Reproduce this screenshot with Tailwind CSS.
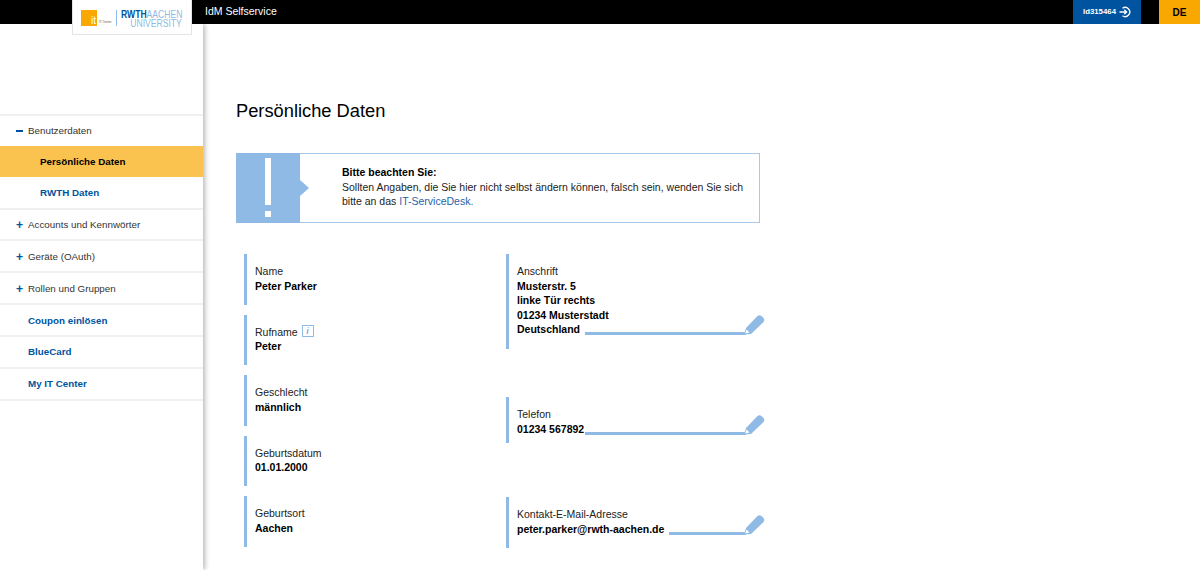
<!DOCTYPE html>
<html lang="de">

<head>
    <meta charset="UTF-8">
    <title>IdM Selfservice</title>
    <script src="https://cdn.jsdelivr.net/npm/@tailwindcss/browser@4"></script>
</head>

<body class="bg-white font-['Liberation_Sans',Arial,sans-serif] text-[10.5px] text-[#222] h-[570px] overflow-hidden">
    <!-- Kopfzeile -->
    <header class="relative z-20 h-6 bg-black flex items-stretch text-white">
        <div class="ml-[72px] w-[120px] h-[35px] bg-white border border-t-0 border-[#e4e4e4] flex items-start shrink-0">
            <div class="shrink-0 ml-[8px] mt-[10px] w-4 h-4 bg-[#f8a800] flex items-end justify-end pr-[1px]">
                <span class="text-[10px] leading-[10px] text-white">it</span>
            </div>
            <span class="shrink-0 mt-[20px] ml-[2px] text-[3px] leading-[4px] text-[#555] whitespace-nowrap w-[13px]">IT Center</span>
            <div class="shrink-0 mt-[10px] ml-[4px] w-px h-4 bg-[#8ebae5]"></div>
            <div class="ml-[4px] mt-[10px] w-[78px] shrink-0 origin-left scale-x-[0.78] text-[11px] leading-[9px] whitespace-nowrap">
                <div><span class="font-bold text-[#00549f]">RWTH</span><span class="text-[#8ebae5]">AACHEN</span></div>
                <div class="text-right text-[#8ebae5]">UNIVERSITY</div>
            </div>
        </div>
        <div class="ml-[13px] text-[10.5px] leading-[23px]">IdM Selfservice</div>
        <div class="ml-auto flex items-stretch">
            <a class="w-[68px] bg-[#00549f] flex items-center justify-center gap-[3px] text-[7.8px] font-bold">
                ld315464
                <svg class="w-3 h-3" viewBox="0 0 12 12" fill="none" stroke="white" stroke-width="1.3">
                    <path d="M3.5 2.2A4.6 4.6 0 1 1 3.5 9.8" />
                    <path d="M0.5 6H7.5M5.3 3.8L7.6 6L5.3 8.2" />
                </svg>
            </a>
            <a class="ml-[18px] w-[41px] bg-[#f8a800] text-black font-bold text-[10px] flex items-center justify-center">DE</a>
        </div>
    </header>

    <div class="flex h-[546px]">
        <!-- Navigation -->
        <nav class="relative z-10 w-[203px] shrink-0 pt-[90px] shadow-[2px_0_5px_rgba(0,0,0,0.28)] bg-white text-[9.8px]">
            <ul class="border-t-2 border-[#f0f0f0]">
                <li class="h-[30px] flex items-center">
                    <span class="ml-[16px] w-[12px]"><span class="block w-[7px] h-[2px] bg-[#00549f]"></span></span>
                    <span class="text-[#333]">Benutzerdaten</span>
                </li>
                <li class="h-[31px] pt-[1px] bg-[#fac34f] flex items-center pl-10 font-bold text-black">Persönliche Daten</li>
                <li class="h-[32.5px] pt-[2px] flex items-center pl-10 font-bold text-[#00549f] border-b-2 border-[#f0f0f0]">RWTH Daten</li>
                <li class="h-[31.85px] pt-[2px] flex items-center border-b-2 border-[#f0f0f0]">
                    <span class="ml-[16px] w-[12px] font-bold text-[#00549f] text-[12px] leading-none">+</span>
                    <span class="text-[#333]">Accounts und Kennwörter</span>
                </li>
                <li class="h-[31.85px] pt-[2px] flex items-center border-b-2 border-[#f0f0f0]">
                    <span class="ml-[16px] w-[12px] font-bold text-[#00549f] text-[12px] leading-none">+</span>
                    <span class="text-[#333]">Geräte (OAuth)</span>
                </li>
                <li class="h-[31.85px] pt-[2px] flex items-center border-b-2 border-[#f0f0f0]">
                    <span class="ml-[16px] w-[12px] font-bold text-[#00549f] text-[12px] leading-none">+</span>
                    <span class="text-[#333]">Rollen und Gruppen</span>
                </li>
                <li class="h-[31.85px] pt-[2px] flex items-center pl-7 font-bold text-[#00549f] border-b-2 border-[#f0f0f0]">Coupon einlösen</li>
                <li class="h-[31.85px] pt-[2px] flex items-center pl-7 font-bold text-[#00549f] border-b-2 border-[#f0f0f0]">BlueCard</li>
                <li class="h-[31.85px] pt-[2px] flex items-center pl-7 font-bold text-[#00549f] border-b-2 border-[#f0f0f0]">My IT Center</li>
            </ul>
        </nav>

        <!-- Inhalt -->
        <main class="pl-[33px] pt-[75px] w-[600px]">
            <h1 class="text-[18.3px] leading-6 text-black">Persönliche Daten</h1>

            <div class="mt-[30px] w-[524px] h-[70px] border-y border-r border-[#a9c9ea] flex">
                <div class="relative w-[64px] bg-[#8ebae5] shrink-0 flex flex-col items-center pt-[5px] -my-px">
                    <div class="w-[6px] h-[47px] bg-white"></div>
                    <div class="mt-[6px] w-[6px] h-[6px] bg-white"></div>
                    <div class="absolute left-full top-[27px] border-y-[8px] border-l-[9px] border-y-transparent border-l-[#8ebae5]"></div>
                </div>
                <div class="pl-[42px] pt-[11px] leading-[14.5px]">
                    <div class="font-bold text-black">Bitte beachten Sie:</div>
                    <p>Sollten Angaben, die Sie hier nicht selbst ändern können, falsch sein, wenden Sie sich<br>bitte an das <a class="text-[#1f63a8]">IT-ServiceDesk.</a></p>
                </div>
            </div>

            <div class="mt-[31px] ml-2 grid grid-cols-[262px_260px] leading-[14.5px]">
                <div class="flex flex-col gap-[10px]">
                    <div class="h-[50.6px] border-l-[3px] border-[#8ebae5] pl-2 pt-[10px]">
                        <div>Name</div>
                        <div class="font-bold text-black">Peter Parker</div>
                    </div>
                    <div class="h-[50.6px] border-l-[3px] border-[#8ebae5] pl-2 pt-[10px]">
                        <div class="flex items-center gap-[4px]">Rufname
                            <span class="w-[12px] h-[12px] border border-[#8ebae5] text-[#3d7fc4] text-[9px] leading-[10px] italic text-center -mt-[1px]">i</span>
                        </div>
                        <div class="font-bold text-black">Peter</div>
                    </div>
                    <div class="h-[50.6px] border-l-[3px] border-[#8ebae5] pl-2 pt-[10px]">
                        <div>Geschlecht</div>
                        <div class="font-bold text-black">männlich</div>
                    </div>
                    <div class="h-[50.6px] border-l-[3px] border-[#8ebae5] pl-2 pt-[10px]">
                        <div>Geburtsdatum</div>
                        <div class="font-bold text-black">01.01.2000</div>
                    </div>
                    <div class="h-[50.6px] border-l-[3px] border-[#8ebae5] pl-2 pt-[10px]">
                        <div>Geburtsort</div>
                        <div class="font-bold text-black">Aachen</div>
                    </div>
                </div>

                <div>
                    <div class="h-[95px] border-l-[3px] border-[#8ebae5] pl-2 pt-[10px]">
                        <div>Anschrift</div>
                        <div class="font-bold text-black">Musterstr. 5</div>
                        <div class="font-bold text-black">linke Tür rechts</div>
                        <div class="font-bold text-black">01234 Musterstadt</div>
                        <div class="flex items-end font-bold text-black pr-[20px]">Deutschland
                            <span class="relative flex-1 ml-[5px] mb-[1.5px] h-[3px] bg-[#8ebae5]">
                                <svg class="absolute left-[-3px] bottom-0 ml-[100%] w-[22px] h-[22px]" viewBox="0 0 22 22"><path fill="#8ebae5" d="M1 21.5L3 15L14.5 3Q16.5 1.5 18.5 3L20.5 5Q22 7 20.5 9L8 21Z"/><path fill="#fff" d="M2 20.5L3.5 16.5L6.5 19.5Z"/></svg>
                            </span>
                        </div>
                    </div>
                    <div class="mt-[48px] h-[46px] border-l-[3px] border-[#8ebae5] pl-2 pt-[10px]">
                        <div>Telefon</div>
                        <div class="flex items-end font-bold text-black pr-[20px]">01234 567892
                            <span class="relative flex-1 ml-[1px] mb-[1.5px] h-[3px] bg-[#8ebae5]">
                                <svg class="absolute left-[-3px] bottom-0 ml-[100%] w-[22px] h-[22px]" viewBox="0 0 22 22"><path fill="#8ebae5" d="M1 21.5L3 15L14.5 3Q16.5 1.5 18.5 3L20.5 5Q22 7 20.5 9L8 21Z"/><path fill="#fff" d="M2 20.5L3.5 16.5L6.5 19.5Z"/></svg>
                            </span>
                        </div>
                    </div>
                    <div class="mt-[54px] h-[51px] border-l-[3px] border-[#8ebae5] pl-2 pt-[10px]">
                        <div>Kontakt-E-Mail-Adresse</div>
                        <div class="flex items-end font-bold text-black pr-[20px]">peter.parker@rwth-aachen.de
                            <span class="relative flex-1 ml-[5px] mb-[1.5px] h-[3px] bg-[#8ebae5]">
                                <svg class="absolute left-[-3px] bottom-0 ml-[100%] w-[22px] h-[22px]" viewBox="0 0 22 22"><path fill="#8ebae5" d="M1 21.5L3 15L14.5 3Q16.5 1.5 18.5 3L20.5 5Q22 7 20.5 9L8 21Z"/><path fill="#fff" d="M2 20.5L3.5 16.5L6.5 19.5Z"/></svg>
                            </span>
                        </div>
                    </div>
                </div>
            </div>
        </main>
    </div>
</body>

</html>
